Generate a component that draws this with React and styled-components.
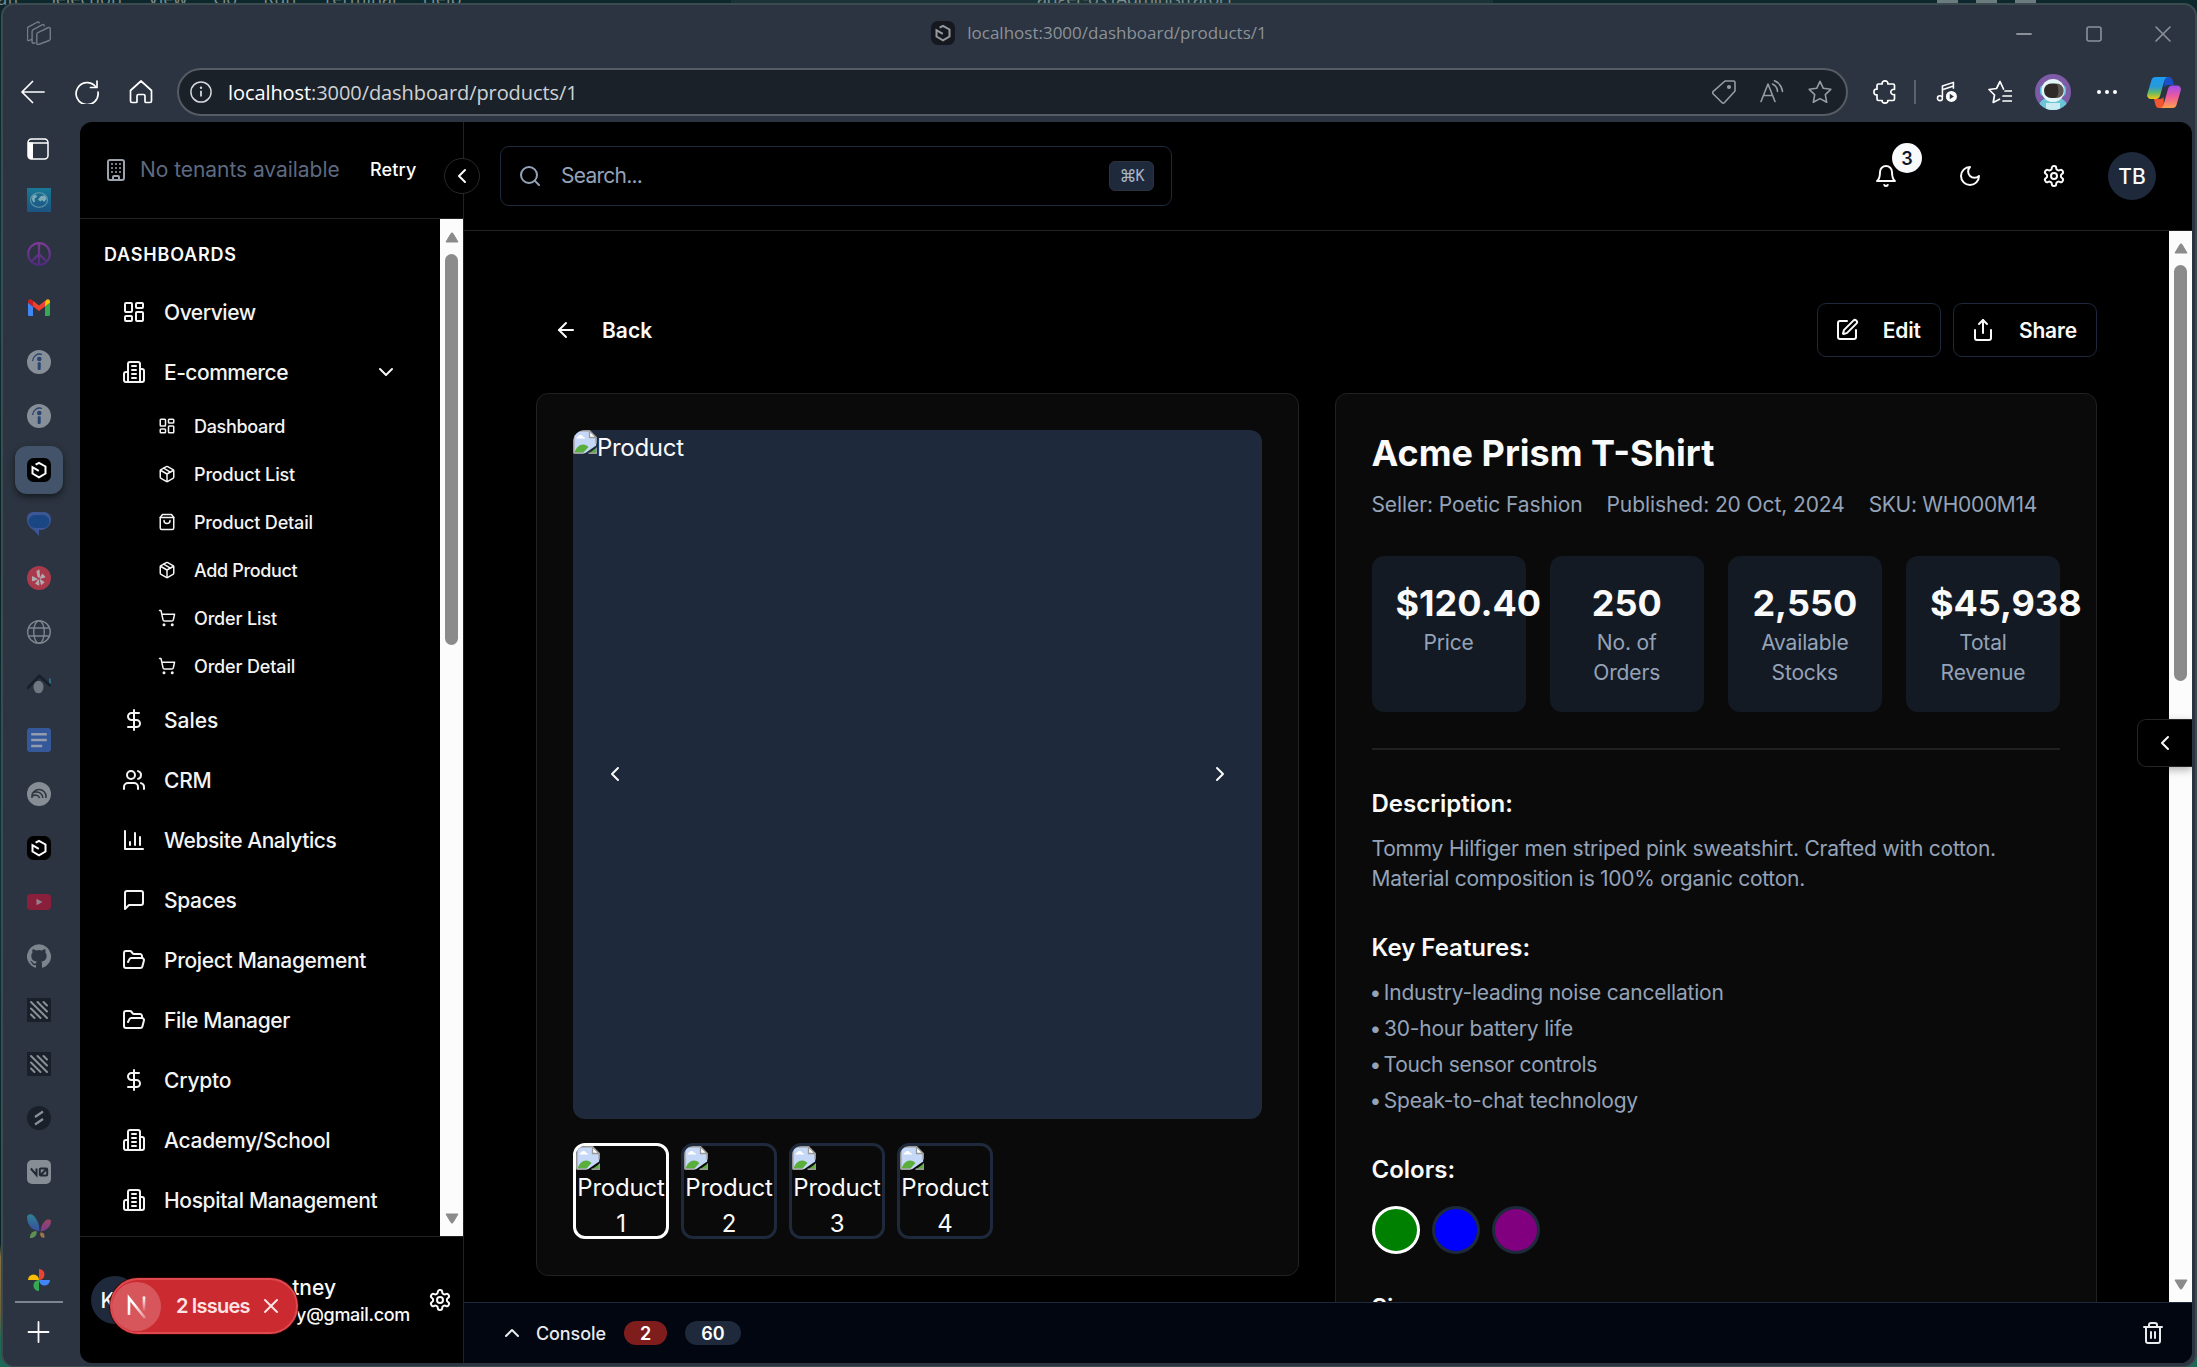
import React from "react";
import styled, { createGlobalStyle, css } from "styled-components";
import {
  ArrowLeft, Building, ChevronDown, ChevronLeft, ChevronRight, ChevronUp, DollarSign,
  LayoutDashboard, Package, Search, Share, ShoppingCart, SquarePen, Trash2, Users, X,
} from "lucide-react";

const GlobalStyle = createGlobalStyle`
  *, *::before, *::after { box-sizing: border-box; }
  body { margin: 0; background: #0c2a2f; font-family: Inter, "Liberation Sans", sans-serif; color: #fafafa; }
  svg { display: block; flex: none; }
  button { font: inherit; color: inherit; background: none; border: 0; padding: 0; }
`;

const center = css`display: flex; align-items: center; justify-content: center;`;

/* ---------- desktop and browser window ---------- */

const Desktop = styled.div`
  position: relative;
  width: 2197px;
  height: 1367px;
  overflow: hidden;
  background: linear-gradient(180deg, #0d272c 0, #0c3138 20%, #0a2127 40%, #0c343b 60%, #0a2229 91%, #86713f 92%, #6d6238 96%, #1b6a58 98%);
`;

const EditorBar = styled.div`
  display: flex;
  height: 5px;
  overflow: hidden;
  background: #0d282d;
  color: #7f8e90;
  font: 18px/20px "Open Sans", sans-serif;
`;

const EditorMenu = styled.div`
  display: flex;
  gap: 26px;
  width: 741px;
  margin-top: -12px;
  margin-left: -10px;
  white-space: nowrap;
`;

const EditorTitle = styled.div`
  width: 762px;
  padding-left: 306px;
  background: #1b3338;
  span { display: block; margin-top: -12px; white-space: nowrap; letter-spacing: -0.5px; }
`;

const EditorLayout = styled.div`
  display: flex;
  gap: 18px;
  margin-left: 444px;
  i { width: 21px; height: 4px; background: #6c7b7d; }
`;

const Window = styled.div`
  position: absolute;
  left: 1px;
  top: 3px;
  width: 2196px;
  height: 1364px;
  display: flex;
  flex-direction: column;
  border: 2px solid #3c4b50;
  border-bottom-width: 1px;
  border-radius: 13px;
  background: #2b3440;
  overflow: hidden;
`;

const TitleBar = styled.div`
  display: grid;
  grid-template-columns: 1fr auto 1fr;
  align-items: center;
  flex: none;
  height: 55px;
  color: #8b929a;
  > svg { margin-left: 24px; }
`;

const TitleText = styled.div`
  display: flex;
  align-items: center;
  gap: 12px;
  font: 17px/24px "Open Sans", sans-serif;
`;

const WindowButtons = styled.div`
  display: flex;
  justify-content: flex-end;
  gap: 5.5px;
  padding-top: 3px;
`;

const WindowButton = styled.button`
  ${center}
  width: 64px;
  height: 40px;
  color: #8b929a;
`;

const Toolbar = styled.div`
  display: flex;
  align-items: center;
  flex: none;
  height: 62px;
  padding: 2px 0 0 3px;
`;

const ToolSlot = styled.button`
  ${center}
  flex: none;
  width: ${(p) => p.$w || 54}px;
  height: 48px;
  color: ${(p) => p.$color || "#fff"};
`;

const AddressBar = styled.div`
  display: flex;
  align-items: center;
  flex: none;
  width: 1671px;
  height: 48px;
  margin: 0 10px 0 9px;
  padding: 0 2px 0 11px;
  border: 2px solid #575c64;
  border-radius: 24px;
  background: #1b2129;
`;

const Url = styled.div`
  flex: 1;
  padding: 1px 0 0 16px;
  font: 20px/28px "Open Sans", sans-serif;
  letter-spacing: -0.08px;
  color: #cfd2d5;
  b { font-weight: 400; color: #fff; }
`;

const ToolDivider = styled.div`
  flex: none;
  width: 2px;
  height: 24px;
  margin: 0 4px 0 2px;
  background: #5a626c;
`;

const WindowBody = styled.div`
  display: flex;
  height: 1241px;
  flex: none;
`;

const Rail = styled.div`
  display: flex;
  flex-direction: column;
  align-items: center;
  flex: none;
  width: 77px;
  padding-right: 5px;
`;

const RailTop = styled.div`
  ${center}
  height: 51px;
  flex: none;
  padding: 2px 2px 0 0;
`;

const RailSlot = styled.div`
  ${center}
  flex: none;
  width: 48px;
  height: 48px;
  margin: 3px 0;
  border-radius: 12px;
  ${(p) => p.$active && css`background: #435369; box-shadow: 0 3px 6px rgba(0, 0, 0, 0.5);`}
`;

const RailLine = styled.div`
  flex: none;
  width: 48px;
  height: 2px;
  margin: -6px 0 17px;
  background: #7d8690;
`;

/* ---------- page ---------- */

const Page = styled.div`
  position: relative;
  display: flex;
  width: 2112px;
  height: 1241px;
  border-radius: 12px;
  background: #000;
  overflow: hidden;
`;

const Sidebar = styled.aside`
  display: flex;
  flex-direction: column;
  flex: none;
  width: 384px;
  border-right: 1px solid #222;
`;

const SidebarHeader = styled.div`
  display: flex;
  align-items: center;
  flex: none;
  height: 97px;
  padding-left: 24px;
  border-bottom: 1px solid #222;
  color: #9ca3af;
`;

const Tenants = styled.span`
  width: 230px;
  margin-left: 12px;
  padding-bottom: 1px;
  font-size: 21px;
  letter-spacing: -0.05px;
  color: #5d6a80;
  white-space: nowrap;
`;

const Retry = styled.button`
  padding-bottom: 1px;
  font-size: 18px;
  font-weight: 500;
  letter-spacing: 0.15px;
  color: #fff;
`;

const SidebarScroll = styled.div`
  display: flex;
  height: 1017px;
  flex: none;
  overflow: hidden;
`;

const Nav = styled.nav`
  flex: 1;
  font-weight: 500;
`;

const NavTitle = styled.h2`
  margin: 0;
  padding: 24px 0 15px 24px;
  font-size: 18px;
  line-height: 24px;
  font-weight: 600;
  letter-spacing: 0.8px;
`;

const NavRow = styled.div`
  display: flex;
  align-items: center;
  gap: 18px;
  height: ${(p) => (p.$sub ? 48 : 60)}px;
  padding: 0 42px 0 ${(p) => (p.$sub ? 78 : 42)}px;
  font-size: ${(p) => (p.$sub ? 18 : 21)}px;
  color: #f4f4f5;
  white-space: nowrap;
  span { flex: 1; letter-spacing: ${(p) => p.$ls || 0}px; }
`;

const SidebarFooter = styled.div`
  display: flex;
  align-items: center;
  height: 127px;
  padding: 0 11px;
  border-top: 1px solid #222;
`;

const Avatar = styled.div`
  ${center}
  flex: none;
  width: 48px;
  height: 48px;
  border-radius: 50%;
  background: #1e293b;
  font-size: 21px;
  font-weight: 500;
`;

const Account = styled.div`
  display: flex;
  flex-direction: column;
  align-items: flex-end;
  width: 271px;
  margin-right: 18px;
  font-weight: 500;
  div { font-size: 21px; line-height: 30px; padding-right: 74px; }
  p { margin: 0; font-size: 18px; line-height: 24px; letter-spacing: -0.3px; }
`;

const IssuesPill = styled.div`
  position: absolute;
  left: 30px;
  top: 1156px;
  display: flex;
  align-items: center;
  width: 188px;
  height: 56px;
  border: 2px solid #df4a50;
  border-radius: 28px;
  background: #cb2a31;
  color: #fde3e4;
  font-size: 20px;
  font-weight: 600;
  box-shadow: 0 0 0 1px rgba(60, 0, 0, 0.8);
`;

const PillMark = styled.div`
  ${center}
  width: 49px;
  height: 49px;
  margin-right: 15px;
  border-radius: 50%;
  background: #d7565c;
`;

const PillText = styled.div`
  display: flex;
  gap: 4px;
  width: 83px;
  letter-spacing: -0.75px;
`;

const CollapseButton = styled.button`
  ${center}
  position: absolute;
  left: 364px;
  top: 36px;
  width: 36px;
  height: 36px;
  border: 1px solid #2a2a2a;
  border-radius: 50%;
  background: #000;
`;

const SideTab = styled.button`
  ${center}
  position: absolute;
  right: 0;
  top: 597px;
  width: 55px;
  height: 48px;
  border: 1px solid #262626;
  border-right: 0;
  border-radius: 9px 0 0 9px;
  background: #000;
  box-shadow: 0 3px 9px rgba(0, 0, 0, 0.3);
`;

const Track = styled.div`
  display: flex;
  flex-direction: column;
  align-items: center;
  flex: none;
  width: 23px;
  padding: ${(p) => p.$top}px 0 12px;
  background: #fcfcfc;
`;

const Thumb = styled.div`
  width: 13px;
  height: ${(p) => p.$h}px;
  margin: 11px 0 auto;
  border-radius: 7px;
  background: #8b8b8b;
`;

const Main = styled.div`
  display: flex;
  flex-direction: column;
  flex: 1;
`;

const TopBar = styled.header`
  display: flex;
  align-items: center;
  justify-content: space-between;
  flex: none;
  height: 109px;
  padding: 0 36px;
  border-bottom: 1px solid #222;
`;

const SearchBox = styled.div`
  display: flex;
  align-items: center;
  width: 672px;
  height: 60px;
  padding: 0 17px;
  border: 1px solid #1e293b;
  border-radius: 9px;
  color: #94a3b8;
  font-size: 21px;
  span { flex: 1; padding: 0 0 1px 19px; letter-spacing: -0.75px; }
`;

const Kbd = styled.kbd`
  ${center}
  width: 45px;
  height: 30px;
  padding-left: 1px;
  border: 1px solid #2b3240;
  border-radius: 6px;
  background: #1e293b;
  color: #a9b6c9;
  font: 15px "DejaVu Sans Mono", "DejaVu Sans", monospace;
  i { font: 17px "DejaVu Sans", sans-serif; letter-spacing: -1px; }
`;

const TopActions = styled.div`
  display: flex;
  align-items: center;
  gap: 24px;
`;

const IconButton = styled.button`
  ${center}
  position: relative;
  width: 60px;
  height: 60px;
`;

const Count = styled.span`
  ${center}
  position: absolute;
  left: 36px;
  top: -3px;
  width: 30px;
  height: 30px;
  border-radius: 50%;
  background: #f8fafc;
  color: #0f172a;
  font-size: 18px;
  font-weight: 600;
`;

const Scroller = styled.div`
  display: flex;
  height: 1071px;
  flex: none;
  overflow: hidden;
`;

const Content = styled.main`
  flex: 1;
  padding: 72px 72px 0;
`;

const ActionRow = styled.div`
  display: flex;
  align-items: center;
  gap: 12px;
  height: 54px;
  margin-bottom: 36px;
`;

const Button = styled.button`
  display: flex;
  align-items: center;
  gap: 24px;
  height: 54px;
  padding: 0 18px 0 17px;
  border: 1px solid ${(p) => (p.$ghost ? "transparent" : "#1e293b")};
  border-radius: 9px;
  font-size: 21px;
  font-weight: 600;
  ${(p) => (p.$ghost ? css`margin-right: auto;` : css`padding-right: 19px; letter-spacing: -0.15px;`)}
`;

const Columns = styled.div`
  display: grid;
  grid-template-columns: 1fr 1fr;
  align-items: start;
  gap: 36px;
`;

const Card = styled.section`
  padding: 36px;
  border: 1px solid #212121;
  border-radius: 12px;
  background: #0a0a0a;
  min-width: 0;
`;

const Preview = styled.div`
  display: flex;
  align-items: flex-start;
  position: relative;
  height: 688.5px;
  border-radius: 12px;
  background: #1e293b;
  font-size: 24px;
  line-height: 36px;
  letter-spacing: -0.3px;
  overflow: hidden;
`;

const SlideButton = styled.button`
  ${center}
  position: absolute;
  top: 314px;
  ${(p) => p.$side}: 12px;
  width: 60px;
  height: 60px;
`;

const ThumbRow = styled.div`
  display: flex;
  gap: 12px;
  margin-top: 24px;
`;

const ThumbTile = styled.div`
  width: 96px;
  height: 96px;
  border: 3px solid ${(p) => (p.$active ? "#fff" : "#1e293b")};
  border-radius: 12px;
  overflow: hidden;
  font-size: 24px;
  line-height: 36px;
  letter-spacing: -0.2px;
  text-align: center;
`;

const ProductTitle = styled.h1`
  margin: 0 0 14px;
  padding-top: 1px;
  font-size: 36px;
  line-height: 45px;
  font-weight: 700;
`;

const Meta = styled.div`
  display: flex;
  gap: 24px;
  font-size: 21px;
  line-height: 30px;
  color: #94a3b8;
  white-space: nowrap;
  span { letter-spacing: -0.1px; }
  span:last-child { letter-spacing: -0.3px; }
`;

const Stats = styled.div`
  display: grid;
  grid-template-columns: repeat(4, minmax(0, 1fr));
  gap: 24px;
  margin-top: 36px;
`;

const Stat = styled.div`
  height: 156px;
  padding: 23px 24px;
  border-radius: 12px;
  background: #141a24;
  text-align: center;
  div { font-size: 36px; line-height: 48px; font-weight: 700; white-space: nowrap; }
  p { margin: 1px -4px 0; font-size: 21px; line-height: 30px; color: #94a3b8; letter-spacing: -0.15px; white-space: pre-line; }
`;

const Rule = styled.div`
  height: 2px;
  margin: 36px 0;
  background: #202020;
`;

const Block = styled.div`
  margin-bottom: 36px;
  font-size: 21px;
  line-height: 30px;
  color: #94a3b8;
`;

const Heading = styled.h3`
  margin: 0 0 12px;
  font-size: 24px;
  line-height: 36px;
  font-weight: 600;
  color: #fafafa;
`;

const Line = styled.div`
  letter-spacing: ${(p) => p.$ls}px;
  white-space: nowrap;
  i { font-style: normal; margin: 0 -3px 0 -2px; }
`;

const Features = styled.div`
  display: grid;
  gap: 6px;
`;

const Swatches = styled.div`
  display: flex;
  gap: 12px;
  padding-top: 6px;
`;

const Swatch = styled.div`
  width: 48px;
  height: 48px;
  border: 3px solid ${(p) => (p.$active ? "#fff" : "#1e293b")};
  border-radius: 50%;
  background: ${(p) => p.$color};
`;

const Console = styled.div`
  display: flex;
  align-items: center;
  flex: 1;
  padding: 0 27px 0 36px;
  border-top: 1px solid #1e293b;
  background: #020610;
  font-size: 18px;
  font-weight: 500;
  color: #e8eaed;
  > span { width: 100px; padding-left: 12px; letter-spacing: -0.1px; }
  > svg:last-child { margin-left: auto; }
`;

const Pill = styled.b`
  ${center}
  width: ${(p) => p.$w}px;
  height: 24px;
  margin-right: 18px;
  border-radius: 12px;
  background: ${(p) => p.$bg};
  color: #fff;
  font-weight: 600;
`;

/* ---------- drawings ---------- */

const Stroke = ({ d, size = 24, w = 2, box = 24, children }) => (
  <svg width={size} height={size} viewBox={`0 0 ${box} ${box}`} fill="none" stroke="currentColor" strokeWidth={w} strokeLinecap="round" strokeLinejoin="round">
    {(Array.isArray(d) ? d : [d]).map((p) => p && <path key={p} d={p} />)}
    {children}
  </svg>
);

const D = {
  building: ["M6 22V4a2 2 0 0 1 2-2h8a2 2 0 0 1 2 2v18Z", "M6 12H4a2 2 0 0 0-2 2v6a2 2 0 0 0 2 2h2", "M18 9h2a2 2 0 0 1 2 2v9a2 2 0 0 1-2 2h-2", "M10 6h4", "M10 10h4", "M10 14h4", "M10 18h4"],
  bag: ["M6 2 3 6v14a2 2 0 0 0 2 2h14a2 2 0 0 0 2-2V6l-3-4Z", "M3 6h18", "M16 10a4 4 0 0 1-8 0"],
  bars: ["M3 3v18h18", "M18 17V9", "M13 17V5", "M8 17v-3"],
  message: ["M21 15a2 2 0 0 1-2 2H7l-4 4V5a2 2 0 0 1 2-2h14a2 2 0 0 1 2 2z"],
  folder: ["m6 14 1.45-2.9A2 2 0 0 1 9.24 10H20a2 2 0 0 1 1.94 2.5l-1.55 6a2 2 0 0 1-1.94 1.5H4a2 2 0 0 1-2-2V5c0-1.1.9-2 2-2h3.93a2 2 0 0 1 1.66.9l.82 1.2a2 2 0 0 0 1.66.9H18a2 2 0 0 1 2 2v2"],
  bell: ["M6 8a6 6 0 0 1 12 0c0 7 3 9 3 9H3s3-2 3-9", "M10.3 21a1.94 1.94 0 0 0 3.4 0"],
  moon: ["M12 3a6 6 0 0 0 9 9 9 9 0 1 1-9-9Z"],
  gear: ["M12.22 2h-.44a2 2 0 0 0-2 2v.18a2 2 0 0 1-1 1.73l-.43.25a2 2 0 0 1-2 0l-.15-.08a2 2 0 0 0-2.73.73l-.22.38a2 2 0 0 0 .73 2.73l.15.1a2 2 0 0 1 1 1.72v.51a2 2 0 0 1-1 1.74l-.15.09a2 2 0 0 0-.73 2.73l.22.38a2 2 0 0 0 2.73.73l.15-.08a2 2 0 0 1 2 0l.43.25a2 2 0 0 1 1 1.73V20a2 2 0 0 0 2 2h.44a2 2 0 0 0 2-2v-.18a2 2 0 0 1 1-1.73l.43-.25a2 2 0 0 1 2 0l.15.08a2 2 0 0 0 2.73-.73l.22-.39a2 2 0 0 0-.73-2.73l-.15-.08a2 2 0 0 1-1-1.74v-.5a2 2 0 0 1 1-1.74l.15-.09a2 2 0 0 0 .73-2.73l-.22-.38a2 2 0 0 0-2.73-.73l-.15.08a2 2 0 0 1-2 0l-.43-.25a2 2 0 0 1-1-1.73V4a2 2 0 0 0-2-2z", "M12 9a3 3 0 1 0 0 6 3 3 0 0 0 0-6z"],
};

const Svg = ({ s = 24, o = 1, children }) => (
  <svg width={s} height={s} viewBox="0 0 24 24" fill="none" opacity={o}>{children}</svg>
);

const AppMark = ({ o = 1 }) => (
  <Svg o={o}>
    <rect width="24" height="24" rx="6.5" fill="#000" />
    <path d="M8.6 6.7 12 4.8l6.5 3.7v7L12 19.3l-6.500-3.800V9.200l6.300 3.700" stroke="#fff" strokeWidth="2" />
  </Svg>
);

const WorkspaceIcon = () => (
  <Svg>
    <path d="M4.5 18.5 1.8 19.600a1 1 0 0 1-1.300-1V7.600c0-.8.4-1.300 1.100-1.700L10.500 1c.8-.4 1.600 0 1.600.8v.6M8.600 21.600l-2.200.6a1 1 0 0 1-1.300-1V10.400c0-.8.4-1.300 1.100-1.700L15.500 3.600c.8-.4 1.700 0 1.700.9v.9M9.800 13.200c0-.8.4-1.300 1.100-1.700l10.500-5c.9-.4 1.900.1 1.900 1.100v10.200c0 .8-.4 1.300-1.100 1.700l-10.600 4c-.9.4-1.800-.2-1.800-1.100z" stroke="#737c87" strokeWidth="1.4" />
  </Svg>
);

const Stripes = () => (
  <Svg>
    <rect width="24" height="24" fill="#1a2029" />
    <path d="M4 4l16 16M10.5 4 20 13.5M4 10.5 13.5 20M16.5 4 20 7.5M4 16.5 7.5 20" stroke="#8a9098" strokeWidth="2" strokeLinecap="round" />
  </Svg>
);

const Indeed = () => (
  <Svg>
    <circle cx="12" cy="12" r="12" fill="#868e98" />
    <circle cx="12.3" cy="9" r="2.3" fill="#28436f" />
    <rect x="10.7" y="12.3" width="3" height="7.7" rx="1" fill="#28436f" />
    <path d="M5.5 11c.6-5 5-8.2 9.500-6.500" stroke="#28436f" strokeWidth="1.3" />
  </Svg>
);

const GlobeTile = () => (
  <Svg>
    <defs><linearGradient id="gt" x2="0" y2="1"><stop stopColor="#1a7896" /><stop offset="1" stopColor="#1c5380" /></linearGradient></defs>
    <rect width="24" height="24" fill="url(#gt)" />
    <ellipse cx="12" cy="12" rx="8.5" ry="7.3" stroke="#6299ae" strokeWidth="1.1" />
    <path d="M5.500 8l3.500-1.500 1 2.500-2.500 1.500.5 3-1.500 1-1.500-3zM11 11.500l3-3.500 4-.5 1.500 3.500-2.500 3-2-2-1.500 1.500z" fill="#7fabb8" />
  </Svg>
);

const Peace = () => (
  <Svg>
    <defs><linearGradient id="pc" gradientUnits="userSpaceOnUse" x1="0" y1="0" x2="0" y2="24"><stop stopColor="#7c3c94" /><stop offset="1" stopColor="#4c2a7c" /></linearGradient></defs>
    <path d="M12 1.1a10.900 10.900 0 1 0 0 21.800 10.900 10.900 0 0 0 0-21.800zM12 1v22M12 12l-7.700 7.700M12 12l7.700 7.700" stroke="url(#pc)" strokeWidth="2.3" />
  </Svg>
);

const Gmail = () => (
  <Svg>
    <path d="M1 6.5v11.900c0 .9.7 1.600 1.600 1.600H6v-9.500z" fill="#4285f4" />
    <path d="M18 20h3.400c.9 0 1.600-.7 1.600-1.600V6.500l-5 4z" fill="#34a853" />
    <path d="M18 5.500v5l5-3.700V5.500c0-2-2.200-2.900-3.700-1.700z" fill="#fbbc04" />
    <path d="M6 10.500v-5.700l6 4.600 6-4.600v5.700l-6 4.600z" fill="#ea4335" />
    <path d="M1 5.500v1.300l5 3.700V4.800L4.700 3.800C3.200 2.700 1 3.500 1 5.500z" fill="#c5221f" />
  </Svg>
);

const Messages = () => (
  <Svg>
    <path d="M7 0h9.500c4.500 0 7.500 3.200 7.500 7.500 0 5.500-4 9.500-9 10.500H12v6l-5.500-6C3 16 0 12.500 0 7c0-4.500 3-7 7-7z" fill="#3d5796" />
    <rect x="1.500" y="3" width="21" height="13" rx="6.5" fill="#1b4684" />
  </Svg>
);

const Yelp = () => (
  <Svg>
    <circle cx="12" cy="12" r="12" fill="#a83a4c" />
    <path d="M11.300 11 10 5.500l2-1.300.4 6.800zM10 13.200l-4.500 1.500v-4zM11.500 14l.3 5-3-1.400zM13.200 13.800l3.600 2.500-2.300 2zM13.200 12.300l2.300-4 2.300 2.700z" fill="#b5a9b0" stroke="#b5a9b0" strokeWidth="1.1" strokeLinejoin="round" />
  </Svg>
);

const Web = () => (
  <Svg>
    <g stroke="#7d858f" strokeWidth="1.4">
      <circle cx="12" cy="12" r="11.3" /><ellipse cx="12" cy="12" rx="5.3" ry="11.3" /><path d="M1.500 8h21M1.500 16h21" />
    </g>
  </Svg>
);

const Roof = () => (
  <Svg>
    <path d="M.3 14.500 12.500 2 23.500 12" stroke="#17212b" strokeWidth="2.8" />
    <ellipse cx="11.5" cy="13" rx="5" ry="6.3" fill="#6f7881" />
    <path d="M22 4.500h2v6l-2-2z" fill="#2b6a86" />
  </Svg>
);

const Docs = () => (
  <Svg>
    <rect width="24" height="24" rx="3" fill="#35589a" />
    <path d="M4.200 6.200h15.600M4.200 12h15.600M4.200 18h11" stroke="#929cae" strokeWidth="2.6" />
  </Svg>
);

const Arcs = () => (
  <Svg>
    <circle cx="12" cy="12" r="12" fill="#868d95" />
    <path d="M5 16v-1.500a7 7 0 0 1 14 0V16M5 11.500c4-3.500 10.500-1 10.800 4.500M5 14.200c3-2.200 7-.7 7.500 1.800" stroke="#2f363f" strokeWidth="1.6" />
  </Svg>
);

const Tube = () => (
  <Svg>
    <rect y="4" width="24" height="16" rx="4" fill="#8a1f3c" />
    <path d="M9.500 8.700v6.600l6-3.300z" fill="#96808d" />
  </Svg>
);

const Octo = () => (
  <Svg>
    <path fill="#7c848d" d="M12 .3a12 12 0 0 0-3.800 23.400c.6.1.8-.3.8-.6v-2c-3.300.7-4-1.600-4-1.600-.6-1.400-1.400-1.800-1.400-1.800-1-.7.1-.7.1-.7 1.200 0 1.900 1.200 1.900 1.200 1 1.800 2.800 1.300 3.500 1 0-.8.4-1.300.7-1.600-2.700-.3-5.500-1.300-5.500-6 0-1.200.5-2.300 1.300-3.100-.2-.4-.6-1.600 0-3.200 0 0 1-.3 3.400 1.200a11.500 11.500 0 0 1 6 0c2.300-1.500 3.300-1.200 3.300-1.200.6 1.600.2 2.800 0 3.200.9.8 1.300 1.900 1.300 3.200 0 4.600-2.800 5.600-5.500 5.900.5.400.9 1 .9 2.200v3.300c0 .3.1.7.8.6A12 12 0 0 0 12 .3" />
  </Svg>
);

const Slash = () => (
  <Svg>
    <circle cx="12" cy="12" r="12" fill="#1a2029" />
    <path d="M8 11l8-5.500M8 18.500 16 13" stroke="#8a9098" strokeWidth="2.2" />
  </Svg>
);

const VZero = () => (
  <Svg>
    <rect width="24" height="24" rx="5" fill="#868d95" />
    <path d="M3.800 8.500l5.700 6.500V8.500M12.800 9.500c0-.6.4-1 1-1h5.400c.6 0 1 .4 1 1v5c0 .6-.4 1-1 1h-5.400c-.6 0-1-.4-1-1zM13.300 15.200l6.500-6.400" stroke="#232a33" strokeWidth="2" />
  </Svg>
);

const Butterfly = () => (
  <Svg>
    <defs>
      <linearGradient id="b1" x2="0" y2="1"><stop stopColor="#2f7f93" /><stop offset="1" stopColor="#3a4fa0" /></linearGradient>
      <linearGradient id="b2" x2="0" y2="1"><stop stopColor="#9a4560" /><stop offset="1" stopColor="#7d3a92" /></linearGradient>
    </defs>
    <path d="M0 3c0-3 4.500-4 7-1 3 3.500 5.500 8 5.500 15C5 17 0 10 0 3z" fill="url(#b1)" />
    <path d="M24 7.500c0-2.500-4-2.500-6-.5-2.500 2.500-4 5.500-4.500 10.500C20 16.500 24 12 24 7.500z" fill="url(#b2)" />
    <path d="M9.800 17.500c-4-1-7 2-6.800 6.500 3.500.5 7-2 6.800-6.500z" fill="#5f8f55" />
    <path d="M13.300 18.500c3-.5 4.500 1.500 4.200 5-2.500 1-5-1-4.200-5z" fill="#a0744a" />
  </Svg>
);

const Photos = () => (
  <Svg>
    <path d="M12 1a5.500 5.500 0 0 1 0 11z" fill="#ea4335" />
    <path d="M23 12a5.500 5.500 0 0 1-11 0z" fill="#4285f4" />
    <path d="M12 23a5.500 5.500 0 0 1 0-11z" fill="#34a853" />
    <path d="M1 12a5.500 5.500 0 0 1 11 0z" fill="#fbbc04" />
  </Svg>
);

const BrokenImage = () => (
  <Svg>
    <path d="M.8.8h15.700l6.700 6.700v8L12 23.200H.8z" fill="#c5d8f7" />
    <path d="M.8.8h15.700l6.700 6.700v6" stroke="#9a9a9a" strokeWidth="1.5" />
    <path d="M.8.8v22.400" stroke="#9a9a9a" strokeWidth="1.5" />
    <path d="M16.500.8v6.700h6.700z" fill="#fff" stroke="#9a9a9a" strokeWidth="1.3" />
    <path d="M3.500 8.500c0-1.700 1.500-2 2-2 .5-2 4-2 4.500.3 1.500 0 2 .8 2 1.700z" fill="#fff" />
    <path d="M1.500 22.500c1.500-5 5-8 8.500-8 2.500 0 4 1 5.500 2.500l-5 5.500z" fill="#5aae3c" />
    <path d="M16 23.300l7.500-5.500v5.500z" fill="#5aae3c" />
    <path d="M.8 23.300h10M15.500 23.300h8v-5.800" stroke="#9a9a9a" strokeWidth="1.4" />
  </Svg>
);

const Astronaut = () => (
  <svg width="36" height="36" viewBox="0 0 36 36">
    <defs><clipPath id="av"><circle cx="18" cy="18" r="18" /></clipPath></defs>
    <g clipPath="url(#av)">
      <rect width="36" height="36" fill="#7d5ba6" />
      <path d="M3 36c0-9 6-13 15-13s15 4 15 13z" fill="#6cc5d6" />
      <path d="M11 29h14v8H11z" fill="#c9ecf3" />
      <rect x="5" y="11" width="26" height="11" rx="4" fill="#5fc0d3" />
      <circle cx="18" cy="16.5" r="11.5" fill="#e4f5f8" />
      <rect x="9" y="9.5" width="18" height="14.5" rx="7.2" fill="#2f2a28" />
      <path d="M21.500 9.500a7.200 7.200 0 0 1 0 14.500c2.500-4 2.500-10 0-14.500z" fill="#5b5450" />
    </g>
  </svg>
);

const Copilot = () => (
  <svg width="34" height="31" viewBox="0 0 34 31">
    <defs>
      <linearGradient id="c1" x2="0" y2="1"><stop stopColor="#1a9cf0" /><stop offset=".45" stopColor="#2a9ad8" /><stop offset=".7" stopColor="#5fb86a" /><stop offset="1" stopColor="#f2c811" /></linearGradient>
      <linearGradient id="c2" x2="0" y2="1"><stop stopColor="#a04cf0" /><stop offset=".5" stopColor="#ef5a9a" /><stop offset="1" stopColor="#fda04c" /></linearGradient>
    </defs>
    <path d="M17 0h5c2 0 3 1 3.500 3l1.500 5h-6c-2 0-3 1-3.500 2.500z" fill="#1c50c8" />
    <path d="M17 31h-5c-2 0-3-1-3.500-3L7 22h6c2 0 3-1 3.500-2.500z" fill="#f0562f" />
    <path d="M8.500 0H21c-2 0-3 1.500-3.500 3l-4.500 16c-.6 2-2 3-4 3H4c-3 0-4.500-2.500-3.700-5L4.500 3C5 1.200 6.500 0 8.500 0z" fill="url(#c1)" />
    <path d="M25.500 31H13c2 0 3-1.500 3.500-3L21 12c.6-2 2-3.500 4-3.500h5c3 0 4.500 2.500 3.700 5L29.500 28c-.5 1.800-2 3-4 3z" fill="url(#c2)" />
  </svg>
);

const Arrow = ({ down }) => (
  <svg width="14" height="11" viewBox="0 0 14 11">
    <path d={down ? "M1 1h12L8 9.500q-1 1.300-2 0z" : "M1 10h12L8 1.500q-1-1.300-2 0z"} fill="#8b8b8b" stroke="#8b8b8b" strokeLinejoin="round" />
  </svg>
);

const Scrollbar = ({ top, thumb }) => (
  <Track $top={top}>
    <Arrow />
    <Thumb $h={thumb} />
    <Arrow down />
  </Track>
);

/* ---------- data ---------- */

const RAIL = [GlobeTile, Peace, Gmail, Indeed, Indeed, AppMark, Messages, Yelp, Web, Roof, Docs, Arcs, AppMark, Tube, Octo, Stripes, Stripes, Slash, VZero, Butterfly, Photos];

const own = (d) => ({ size }) => <Stroke d={d} size={size} />;
const IconBuilding = own(D.building);
const IconFolder = own(D.folder);

const NAV = [
  { icon: LayoutDashboard, label: "Overview", ls: -0.45 },
  { icon: IconBuilding, label: "E-commerce", ls: -0.5, open: true },
  { icon: LayoutDashboard, label: "Dashboard", ls: -0.3, sub: true },
  { icon: Package, label: "Product List", ls: -0.15, sub: true },
  { icon: own(D.bag), label: "Product Detail", ls: -0.18, sub: true },
  { icon: Package, label: "Add Product", ls: -0.35, sub: true },
  { icon: ShoppingCart, label: "Order List", ls: -0.15, sub: true },
  { icon: ShoppingCart, label: "Order Detail", ls: -0.15, sub: true },
  { icon: DollarSign, label: "Sales" },
  { icon: Users, label: "CRM", ls: -0.2 },
  { icon: own(D.bars), label: "Website Analytics", ls: -0.45 },
  { icon: own(D.message), label: "Spaces", ls: -0.35 },
  { icon: IconFolder, label: "Project Management", ls: -0.34 },
  { icon: IconFolder, label: "File Manager", ls: -0.32 },
  { icon: DollarSign, label: "Crypto", ls: -0.2 },
  { icon: IconBuilding, label: "Academy/School", ls: -0.28 },
  { icon: IconBuilding, label: "Hospital Management", ls: -0.34 },
];

const STATS = [["$120.40", "Price"], ["250", "No. of\nOrders"], ["2,550", "Available\nStocks"], ["$45,938", "Total\nRevenue"]];

const FEATURES = [
  ["Industry-leading noise cancellation", -0.22],
  ["30-hour battery life", -0.18],
  ["Touch sensor controls", -0.34],
  ["Speak-to-chat technology", -0.22],
];

export default function App() {
  return (
    <Desktop>
      <GlobalStyle />
      <EditorBar>
        <EditorMenu>
          {["raft", "Selection", "View", "Go", "Run", "Terminal", "Help"].map((m) => <span key={m}>{m}</span>)}
        </EditorMenu>
        <EditorTitle><span>anger-os [Administrator]</span></EditorTitle>
        <EditorLayout><i /><i /><i /></EditorLayout>
      </EditorBar>

      <Window>
        <TitleBar>
          <WorkspaceIcon />
          <TitleText><AppMark o={0.5} />localhost:3000/dashboard/products/1</TitleText>
          <WindowButtons>
            <WindowButton><Stroke size={16} box={16} w={1.8} d="M1 8h14" /></WindowButton>
            <WindowButton><Stroke size={16} box={16} w={1.6}><rect x="1" y="1" width="14" height="14" rx="2" /></Stroke></WindowButton>
            <WindowButton><Stroke size={16} box={16} w={1.6} d="M1 1l14 14M15 1 1 15" /></WindowButton>
          </WindowButtons>
        </TitleBar>

        <Toolbar>
          <ToolSlot><Stroke w={1.7} d="M23 12H1M11.500 1.500 1 12l10.500 10.500" /></ToolSlot>
          <ToolSlot><Stroke w={1.7} d={["M20.500 6.500A11 11 0 1 0 23 12", "M22 1v6.500h-6.500"]} /></ToolSlot>
          <ToolSlot><Stroke w={1.7} d="M1.500 10.500 12 1l10.500 9.500V21c0 1-.5 1.500-1.500 1.500h-4c-.6 0-1-.4-1-1V16c0-1-.5-1.500-1.500-1.500h-5C8.500 14.500 8 15 8 16v5.500c0 .6-.4 1-1 1H3c-1 0-1.500-.5-1.500-1.500z" /></ToolSlot>
          <AddressBar>
            <Svg s={22}><circle cx="12" cy="12" r="11" stroke="#d5d7da" strokeWidth="1.6" /><path d="M12 10.500V17" stroke="#d5d7da" strokeWidth="2" /><circle cx="12" cy="7.3" r="1.3" fill="#d5d7da" /></Svg>
            <Url><b>localhost</b>:3000/dashboard/products/1</Url>
            <ToolSlot $w={48} $color="#969ba1"><Stroke w={1.6} d="M13 1h8.500C22.500 1 23 1.500 23 2.500V11L12.500 22.500c-.9.9-1.700.9-2.600 0L1.300 14c-.9-.9-.9-1.700 0-2.600z"><circle cx="17" cy="7" r="1.3" fill="currentColor" /></Stroke></ToolSlot>
            <ToolSlot $w={48} $color="#969ba1"><Stroke w={1.6} d={["M1 21.500 8 4l7 17.500M3.500 15.500h9", "M12.500 4c3 1.500 5 4.500 5 7.500M14.500.8c4.500 2 7.500 6 8 10.700"]} /></ToolSlot>
            <ToolSlot $w={48} $color="#969ba1"><Stroke w={1.6} d="M12 1.300l3.300 7 7.500 1-5.500 5.300 1.400 7.700L12 18.600l-6.700 3.700 1.400-7.700L1.200 9.300l7.500-1z" /></ToolSlot>
          </AddressBar>
          <ToolSlot><Stroke w={1.7} d="M5.500 4h3.700C8.800 2.200 10 .9 12 .9s3.200 1.300 2.800 3.100h5.200c1 0 1.500.5 1.500 1.500v3.800c-2-.2-3.700.8-3.700 2.700s1.700 2.900 3.700 2.700v4.300c0 1-.5 1.500-1.500 1.500h-5.200c.4 1.700-.8 2.600-2.800 2.600s-3.200-.9-2.800-2.600H5.500c-1 0-1.500-.5-1.500-1.500v-4.200c-1.800.4-3.100-.8-3.100-2.800S2.200 8.800 4 9.200V5.500C4 4.500 4.500 4 5.500 4z" /></ToolSlot>
          <ToolDivider />
          <ToolSlot>
            <Svg s={22}>
              <path d="M7 17.500V5.500l12-4v7M7 9.500l12-4" stroke="#fff" strokeWidth="1.7" strokeLinejoin="round" />
              <circle cx="4.3" cy="18.7" r="2.7" stroke="#fff" strokeWidth="1.7" />
              <circle cx="16.8" cy="16.8" r="6" fill="#fff" /><path d="M15 13.800v6l4.500-3z" fill="#2b3440" />
            </Svg>
          </ToolSlot>
          <ToolSlot $w={52}><Stroke w={1.7} d={["M15.500 9 12 1.500 8.500 8.500l-7.500 1L6.500 15l-1.300 7.500 6.300-3.300", "M17 11h6.500M15 16h8.500M15 21h8.500"]} /></ToolSlot>
          <ToolSlot><Astronaut /></ToolSlot>
          <ToolSlot $w={54}><Svg><g fill="#fff"><circle cx="4" cy="12" r="2" /><circle cx="12" cy="12" r="2" /><circle cx="20" cy="12" r="2" /></g></Svg></ToolSlot>
          <ToolSlot $w={60}><Copilot /></ToolSlot>
        </Toolbar>

        <WindowBody>
          <Rail>
            <RailTop>
              <Svg><rect x="2" y="2" width="20" height="20" rx="3.5" stroke="#fff" strokeWidth="1.5" /><path d="M2 6h20" stroke="#fff" strokeWidth="1.5" /><path d="M2 5.500h5V22H5c-2 0-3-1-3-3z" fill="#fff" /></Svg>
            </RailTop>
            {RAIL.map((Icon, i) => <RailSlot key={i} $active={i === 5}><Icon /></RailSlot>)}
            <RailLine />
            <Stroke size={24} w={1.8} d="M11.500 2v20M1.500 12h20" />
          </Rail>

          <Page>
            <Sidebar>
              <SidebarHeader>
                <Building size={24} />
                <Tenants>No tenants available</Tenants>
                <Retry>Retry</Retry>
              </SidebarHeader>
              <SidebarScroll>
                <Nav>
                  <NavTitle>DASHBOARDS</NavTitle>
                  {NAV.map((n) => (
                    <NavRow key={n.label} $sub={n.sub} $ls={n.ls}>
                      <n.icon size={n.sub ? 18 : 24} />
                      <span>{n.label}</span>
                      {n.open && <ChevronDown size={24} />}
                    </NavRow>
                  ))}
                </Nav>
                <Scrollbar top={13} thumb={391} />
              </SidebarScroll>
              <SidebarFooter>
                <Avatar>KC</Avatar>
                <Account>
                  <div>tney</div>
                  <p>y@gmail.com</p>
                </Account>
                <Stroke d={D.gear} />
              </SidebarFooter>
            </Sidebar>

            <Main>
              <TopBar>
                <SearchBox>
                  <Search size={24} />
                  <span>Search...</span>
                  <Kbd><i>⌘</i>K</Kbd>
                </SearchBox>
                <TopActions>
                  <IconButton><Stroke d={D.bell} /><Count>3</Count></IconButton>
                  <IconButton><Stroke d={D.moon} /></IconButton>
                  <IconButton><Stroke d={D.gear} /></IconButton>
                  <Avatar>TB</Avatar>
                </TopActions>
              </TopBar>

              <Scroller>
                <Content>
                  <ActionRow>
                    <Button $ghost><ArrowLeft size={24} />Back</Button>
                    <Button><SquarePen size={24} />Edit</Button>
                    <Button><Share size={24} />Share</Button>
                  </ActionRow>
                  <Columns>
                    <Card>
                      <Preview>
                        <BrokenImage />Product
                        <SlideButton $side="left"><ChevronLeft size={24} /></SlideButton>
                        <SlideButton $side="right"><ChevronRight size={24} /></SlideButton>
                      </Preview>
                      <ThumbRow>
                        {[1, 2, 3, 4].map((n) => (
                          <ThumbTile key={n} $active={n === 1}><BrokenImage />Product {n}</ThumbTile>
                        ))}
                      </ThumbRow>
                    </Card>

                    <Card>
                      <ProductTitle>Acme Prism T-Shirt</ProductTitle>
                      <Meta>
                        <span>Seller: Poetic Fashion</span>
                        <span>Published: 20 Oct, 2024</span>
                        <span>SKU: WH000M14</span>
                      </Meta>
                      <Stats>
                        {STATS.map(([v, l]) => <Stat key={l}><div>{v}</div><p>{l}</p></Stat>)}
                      </Stats>
                      <Rule />
                      <Block>
                        <Heading>Description:</Heading>
                        <Line $ls={-0.22}>Tommy Hilfiger men striped pink sweatshirt. Crafted with cotton.</Line>
                        <Line $ls={-0.28}>Material composition is 100% organic cotton.</Line>
                      </Block>
                      <Block>
                        <Heading>Key Features:</Heading>
                        <Features>
                          {FEATURES.map(([f, ls]) => <Line key={f} $ls={ls}><i>•</i> {f}</Line>)}
                        </Features>
                      </Block>
                      <Block>
                        <Heading>Colors:</Heading>
                        <Swatches>
                          <Swatch $color="#008000" $active />
                          <Swatch $color="#0000ff" />
                          <Swatch $color="#800080" />
                        </Swatches>
                      </Block>
                      <Block>
                        <Heading>Sizes:</Heading>
                      </Block>
                    </Card>
                  </Columns>
                </Content>
                <Scrollbar top={12} thumb={416} />
              </Scroller>

              <Console>
                <ChevronUp size={24} />
                <span>Console</span>
                <Pill $w={43} $bg="#7f1d1d">2</Pill>
                <Pill $w={56} $bg="#1e293b">60</Pill>
                <Trash2 size={24} />
              </Console>
            </Main>

            <CollapseButton><ChevronLeft size={24} /></CollapseButton>
            <SideTab><ChevronLeft size={24} /></SideTab>
            <IssuesPill>
              <PillMark>
                <svg width="24" height="26" viewBox="0 0 24 26" fill="none">
                  <defs>
                    <linearGradient id="nm" gradientUnits="userSpaceOnUse" x1="8" y1="12" x2="20" y2="25"><stop stopColor="#fff" /><stop offset="1" stopColor="#fff" stopOpacity=".3" /></linearGradient>
                    <linearGradient id="nr" gradientUnits="userSpaceOnUse" x1="0" y1="4" x2="0" y2="19"><stop stopColor="#fff" /><stop offset="1" stopColor="#fff" stopOpacity="0" /></linearGradient>
                  </defs>
                  <path d="M4 22V5L20 25" stroke="url(#nm)" strokeWidth="2.6" />
                  <path d="M19 3.500v15" stroke="url(#nr)" strokeWidth="2.6" />
                </svg>
              </PillMark>
              <PillText><span>2</span><span>Issues</span></PillText>
              <X size={24} strokeWidth={2} />
            </IssuesPill>
          </Page>
        </WindowBody>
      </Window>
    </Desktop>
  );
}
